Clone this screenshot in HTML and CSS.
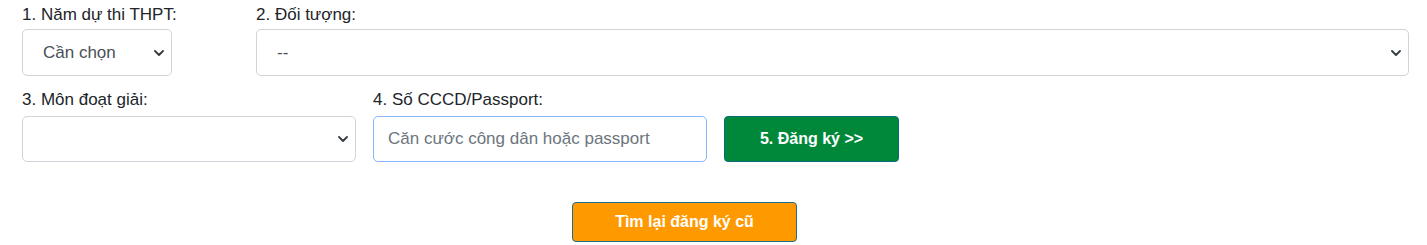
FILE: index.html
```html
<!DOCTYPE html>
<html lang="vi">
<head>
    <meta charset="UTF-8">
    <meta name="viewport" content="width=device-width, initial-scale=1.0">
    <title>Đăng ký</title>
    <link rel="stylesheet" href="styles.css">
</head>
<body>
    <form class="reg-form">
        <div class="row">
            <div class="form-group year">
                <label for="nam-thi">1. Năm dự thi THPT:</label>
                <select id="nam-thi">
                    <option>Cần chọn</option>
                </select>
            </div>
            <div class="form-group target">
                <label for="doi-tuong">2. Đối tượng:</label>
                <select id="doi-tuong">
                    <option>--</option>
                </select>
            </div>
        </div>

        <div class="row second">
            <div class="form-group subject">
                <label for="mon-giai">3. Môn đoạt giải:</label>
                <select id="mon-giai">
                    <option></option>
                </select>
            </div>
            <div class="form-group idcard">
                <label for="cccd">4. Số CCCD/Passport:</label>
                <input type="text" id="cccd" placeholder="Căn cước công dân hoặc passport">
            </div>
            <div class="form-group submit">
                <button type="button" class="btn-register">5. Đăng ký &gt;&gt;</button>
            </div>
        </div>

        <div class="lookup">
            <button type="button" class="btn-lookup">Tìm lại đăng ký cũ</button>
        </div>
    </form>
</body>
</html>
```

FILE: styles.css
```css
body {
    font-family: 'Liberation Sans', Arial, sans-serif;
    margin: 0;
    padding: 0 18px 0 22px;
    background-color: #fff;
    color: #212529;
}
.reg-form {
    padding-top: 4px;
}
.row {
    display: flex;
    gap: 17px;
    align-items: flex-end;
}
.row.second {
    margin-top: 13px;
}
.form-group {
    display: flex;
    flex-direction: column;
}
label {
    font-size: 17px;
    line-height: 21px;
    margin-bottom: 4px;
    white-space: nowrap;
}
.second label {
    margin-bottom: 6px;
}
.year {
    width: 150px;
}
.target {
    flex: 1;
    margin-left: 67px;
}
.subject, .idcard {
    width: 334px;
}
select, input {
    box-sizing: border-box;
    height: 47px;
    width: 100%;
    font-family: inherit;
    font-size: 17px;
    color: #495057;
    background-color: #fff;
    border: 1px solid #ced4da;
    border-radius: 5px;
    padding: 0 20px;
}
.second select, .second input {
    height: 46px;
}
select {
    appearance: none;
    -webkit-appearance: none;
    background-image: url("data:image/svg+xml,%3csvg xmlns='http://www.w3.org/2000/svg' viewBox='0 0 10 6'%3e%3cpath fill='none' stroke='%23343a40' stroke-width='1.8' stroke-linecap='round' stroke-linejoin='round' d='M1 1l4 4 4-4'/%3e%3c/svg%3e");
    background-repeat: no-repeat;
    background-position: right 7px center;
    background-size: 10px 6px;
    padding-right: 24px;
}
input {
    border-color: #86b7fe;
    padding: 0 14px;
    outline: none;
}
input::placeholder {
    color: #6c757d;
}
.btn-register {
    box-sizing: border-box;
    width: 175px;
    height: 46px;
    font-family: inherit;
    font-size: 16px;
    font-weight: bold;
    color: #fff;
    background-color: #00883a;
    border: 1px solid #0b6a7c;
    border-radius: 4px;
    cursor: pointer;
}
.lookup {
    margin-top: 40px;
    padding-left: 550px;
}
.btn-lookup {
    box-sizing: border-box;
    width: 225px;
    height: 40px;
    font-family: inherit;
    font-size: 16px;
    font-weight: bold;
    color: #fff;
    background-color: #ff9900;
    border: 1px solid #1c6e8c;
    border-radius: 4px;
    cursor: pointer;
}
```
